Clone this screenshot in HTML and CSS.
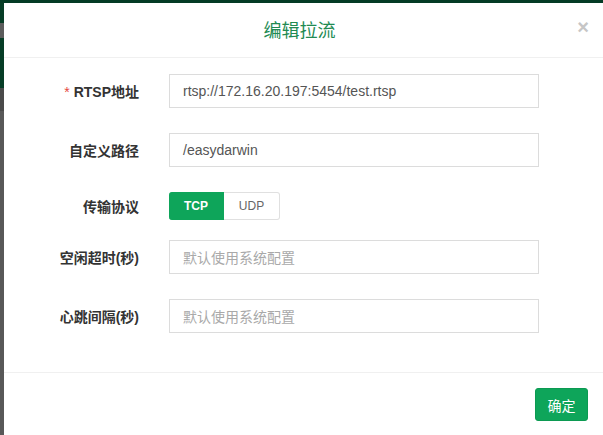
FILE: index.html
```html
<!DOCTYPE html>
<html lang="zh">
<head>
<meta charset="utf-8">
<title>编辑拉流</title>
<link rel="stylesheet" href="styles.css">
</head>
<body>
<div class="topbar"></div>
<div class="stage">
  <div class="strip"></div>
  <div class="modal">
    <div class="modal-header">
      <h3 class="modal-title">编辑拉流</h3>
      <span class="close">×</span>
    </div>
    <div class="modal-body">
      <div class="form-row">
        <label class="form-label"><span class="req">*</span> RTSP地址</label>
        <div class="input">rtsp://172.16.20.197:5454/test.rtsp</div>
      </div>
      <div class="form-row">
        <label class="form-label">自定义路径</label>
        <div class="input">/easydarwin</div>
      </div>
      <div class="form-row radio-row">
        <label class="form-label">传输协议</label>
        <div class="radio-group">
          <span class="radio-btn active">TCP</span>
          <span class="radio-btn">UDP</span>
        </div>
      </div>
      <div class="form-row">
        <label class="form-label">空闲超时(秒)</label>
        <div class="input placeholder">默认使用系统配置</div>
      </div>
      <div class="form-row">
        <label class="form-label">心跳间隔(秒)</label>
        <div class="input placeholder">默认使用系统配置</div>
      </div>
    </div>
    <div class="modal-footer">
      <button class="btn-primary">确定</button>
    </div>
  </div>
</div>
</body>
</html>
```
FILE: styles.css
```css
* { box-sizing: border-box; }
html, body {
  margin: 0;
  padding: 0;
  height: 100%;
  overflow: hidden;
}
body {
  font-family: "Liberation Sans", Arial, "Noto Sans CJK SC", sans-serif;
  background: #555;
  display: flex;
  flex-direction: column;
}
.topbar {
  height: 3px;
  background: #043b25;
  flex: none;
}
.stage {
  flex: 1;
  display: flex;
}
.strip {
  width: 4px;
  flex: none;
  background: linear-gradient(to bottom,
    #063d26 0, #063d26 20px,
    #5c5c5c 20px, #5c5c5c 35px,
    #063d26 35px, #063d26 85px,
    #4a4a4a 85px, #4a4a4a 108px,
    #585858 108px);
}
.modal {
  flex: 1;
  background: #fff;
  display: flex;
  flex-direction: column;
}
.modal-header {
  height: 55px;
  border-bottom: 1px solid #f0f0f0;
  display: flex;
  align-items: center;
  justify-content: center;
  padding-right: 8px;
  position: relative;
}
.modal-title {
  margin: 0;
  font-size: 18px;
  font-weight: normal;
  color: #218a52;
  padding-bottom: 3px;
}
.close {
  position: absolute;
  right: 14px;
  top: 14px;
  font-size: 20px;
  color: #c6c6c6;
  font-weight: bold;
  line-height: 1;
}
.modal-body {
  padding: 16px 0 39px 0;
  display: flex;
  flex-direction: column;
  gap: 25px;
}
.form-row {
  display: grid;
  grid-template-columns: 135px 370px;
  column-gap: 30px;
  align-items: center;
  height: 34px;
}
.radio-row {
  height: 28px;
  margin-bottom: -5px;
}
.form-label {
  text-align: right;
  font-size: 14px;
  font-weight: bold;
  color: #333;
}
.req {
  color: #e5483f;
  font-weight: normal;
}
.input {
  height: 34px;
  border: 1px solid #dcdcdc;
  padding: 0 13px;
  display: flex;
  align-items: center;
  font-size: 14px;
  color: #555;
}
.input.placeholder {
  color: #a9a9a9;
}
.radio-group {
  display: flex;
}
.radio-btn {
  width: 55px;
  height: 28px;
  display: flex;
  align-items: center;
  justify-content: center;
  font-size: 12px;
  color: #666;
  border: 1px solid #e0e0e0;
  border-left: none;
  border-radius: 0 3px 3px 0;
}
.radio-btn.active {
  width: 55px;
  background: #0ea55a;
  border-color: #0ea55a;
  color: #fff;
  font-weight: bold;
  border-radius: 3px 0 0 3px;
}
.radio-btn:not(.active) {
  width: 56px;
}
.modal-footer {
  border-top: 1px solid #f0f0f0;
  padding: 15px 15px 0 0;
  display: flex;
  justify-content: flex-end;
}
.btn-primary {
  width: 53px;
  height: 33px;
  border: 1px solid #0c9a52;
  border-radius: 3px;
  background: #0ea55a;
  color: #fff;
  font-size: 14px;
  font-family: "Liberation Sans", "Noto Sans CJK SC", sans-serif;
  padding: 0;
}
```
